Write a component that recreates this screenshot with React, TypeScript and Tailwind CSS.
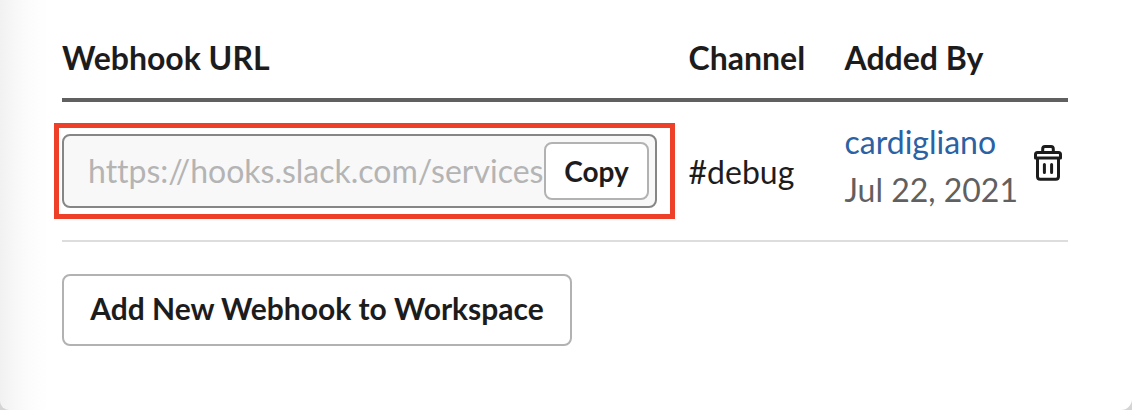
function TrashIcon() {
  return (
    <svg width="30" height="38" viewBox="0 0 30 38" fill="none" stroke="#1d1c1d" strokeWidth="3" strokeLinejoin="round" strokeLinecap="round">
      <path d="M9.7 8V5Q9.7 2.6 12 2.6H18Q20.3 2.6 20.3 5V8" />
      <path d="M2.5 14V10.5Q2.5 8.5 4.5 8.5H25.5Q27.5 8.5 27.5 10.5V14Z" />
      <path d="M4.5 15V32.5Q4.5 35.2 7.2 35.2H22.8Q25.5 35.2 25.5 32.5V15" />
      <path d="M11.4 20.5V28.5M18.6 20.5V28.5" />
    </svg>
  );
}

export default function App() {
  return (
    <div className="h-[410px] w-[1132px] overflow-hidden bg-[#d4d4d4] font-['Lato',sans-serif] text-[32px] leading-[48px] text-[#1d1c1d] [font-variant-ligatures:none]">
      <main className="h-full rounded-br-[11px] rounded-bl-[9px] bg-[linear-gradient(to_right,#f1f1f1_0px,#f8f8f8_16px,#fcfcfc_30px,#ffffff_48px)] pl-[62px] pr-16">
        <div className="flex h-[102px] border-b-4 border-[#616061] pt-[34px] font-bold whitespace-nowrap">
          <div className="w-[626.5px]">Webhook URL</div>
          <div className="w-[156px]">Channel</div>
          <div>Added By</div>
        </div>
        <div className="flex h-[140px] border-b-2 border-[#dddddd] whitespace-nowrap">
          <div className="w-[626.5px] pt-8">
            <div className="relative flex h-[74px] w-[595px] items-center rounded-lg border-2 border-[#868686] bg-[#f8f8f8] pr-1.5 pl-6">
              <div className="flex-1 overflow-hidden text-[#b4b4b4]">https://hooks.slack.com/services</div>
              <button className="flex h-[58px] w-[105px] shrink-0 items-center justify-center rounded-lg border-2 border-[#b2b2b2] bg-white text-[28px] font-bold">Copy</button>
              <div className="pointer-events-none absolute -top-[13px] -left-[10px] h-24 w-[621px] border-[5px] border-[#ee4028]" />
            </div>
          </div>
          <div className="w-[156px] pt-[46px]">#debug</div>
          <div className="w-[188.5px] pt-4">
            <div className="text-[#2a62a5]">cardigliano</div>
            <div className="text-[#616061]">Jul 22, 2021</div>
          </div>
          <div className="pt-[42px]">
            <TrashIcon />
          </div>
        </div>
        <button className="mt-8 flex h-[72px] w-[510px] items-center justify-center rounded-lg border-2 border-[#b2b2b2] bg-white pb-1 text-[30px] font-bold whitespace-nowrap">
          Add New Webhook to Workspace
        </button>
      </main>
    </div>
  );
}
